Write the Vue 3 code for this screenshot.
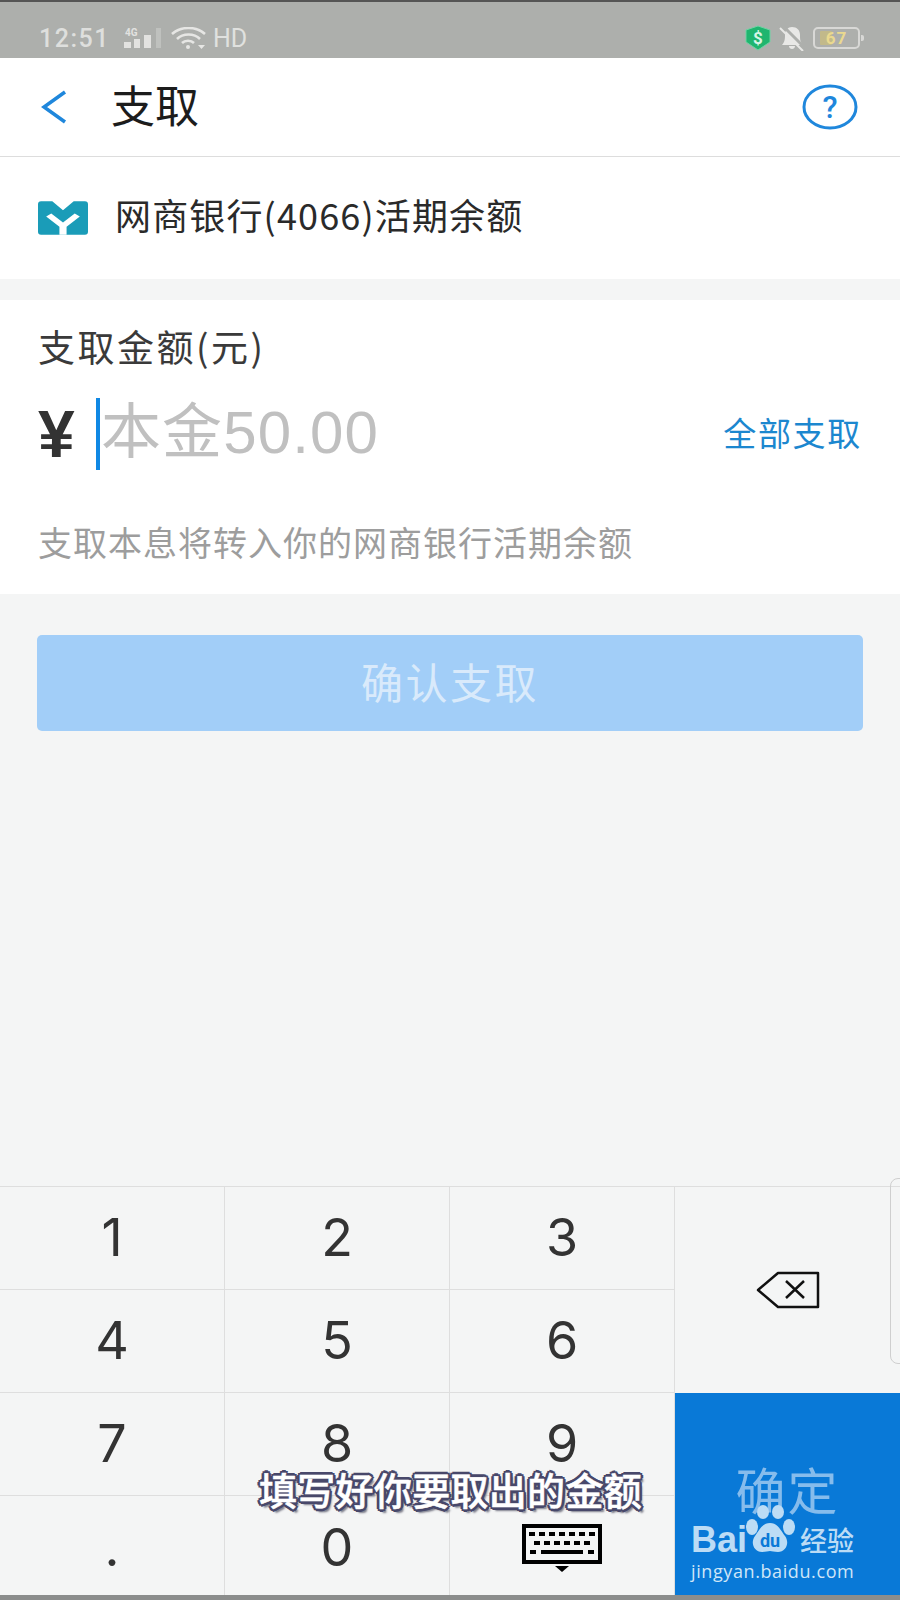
<script setup>
const keys = ['1','2','3','4','5','6','7','8','9','.','0']
</script>

<template>
  <div class="page">
    <div class="status">
      <div class="status-left">
        <span class="time">12:51</span>
        <svg class="signal" width="37" height="20" viewBox="0 0 37 20">
          <text x="1" y="8" class="g4">4G</text>
          <rect x="0" y="14" width="7" height="6" fill="#e2e2e0"/>
          <rect x="10" y="11" width="6" height="9" fill="#e2e2e0"/>
          <rect x="20" y="7" width="7" height="13" fill="#e2e2e0"/>
          <rect x="32" y="0" width="5" height="20" fill="#bfc1be"/>
        </svg>
        <svg class="wifi" width="36" height="22" viewBox="0 0 36 22" fill="none" stroke="#e6e6e4" stroke-width="2.600">
          <path d="M1 7C10-1 25-1 34 7"/>
          <path d="M6 12C12 6 23 6 29 12"/>
          <path d="M11 16C14 13 20 13 23 16"/>
          <circle cx="17" cy="20" r="2" fill="#e6e6e4" stroke="none"/>
          <path d="M27 18h7l-3.500 4z" fill="#e6e6e4" stroke="none"/>
        </svg>
        <span class="hd">HD</span>
      </div>
      <div class="status-right">
        <svg width="26" height="26" viewBox="0 0 26 26">
          <path d="M13 1L25 5V17L13 25L1 17V5Z" fill="#1fb56f" stroke="#6fd3a3" stroke-width="1"/>
          <text x="13" y="18.500" class="dollar">$</text>
        </svg>
        <svg width="26" height="26" viewBox="0 0 26 26">
          <path d="M3 20C6 17 6 13 6 10C6 5 9 2 13 2C18 2 21 5 21 10C21 14 21 17 24 20Z" fill="#e8e8e6"/>
          <path d="M10 21C10 25 16 25 16 21Z" fill="#e8e8e6"/>
          <path d="M3 0L26 23" stroke="#adafac" stroke-width="3"/>
          <path d="M1 3L24 26" stroke="#e8e8e6" stroke-width="2"/>
        </svg>
        <div class="battery">
          <span class="fill"></span>
          <span class="level">67</span>
          <span class="nub"></span>
        </div>
      </div>
    </div>

    <header class="nav">
      <svg class="back" width="26" height="34" viewBox="0 0 26 34" fill="none" stroke="#1f87dc" stroke-width="3.500">
        <path d="M24 2L3 17L24 32"/>
      </svg>
      <h1 class="title">支取</h1>
      <span class="spacer"></span>
      <svg class="help" width="56" height="46" viewBox="0 0 56 46">
        <ellipse cx="28" cy="23" rx="26" ry="21" fill="none" stroke="#1f87dc" stroke-width="3"/>
        <text x="28" y="34" class="qmark">?</text>
      </svg>
    </header>

    <section class="bank">
      <svg class="logo" width="50" height="34" viewBox="0 0 49 33">
        <path d="M3 0H14L24.500 9L35 0H46Q49 0 49 3V30Q49 33 46 33H3Q0 33 0 30V3Q0 0 3 0Z" fill="#1a9cb8"/>
        <path d="M8 15L13 12L24.500 21L36 12L41 15L28 25V33H21V25Z" fill="#fff"/>
      </svg>
      <span class="bank-name">网商银行(4066)活期余额</span>
    </section>

    <section class="amount">
      <div class="label">支取金额(元)</div>
      <div class="input-row">
        <span class="yen">¥</span>
        <span class="caret"></span>
        <span class="placeholder">本金50.00</span>
        <span class="spacer"></span>
        <span class="all">全部支取</span>
      </div>
      <div class="hint">支取本息将转入你的网商银行活期余额</div>
    </section>

    <div class="action">
      <div class="confirm">确认支取</div>
    </div>

    <span class="spacer"></span>

    <section class="keyboard">
      <div class="keys">
        <div v-for="k in keys" :key="k" class="key">{{ k }}</div>
        <div class="key">
          <svg width="80" height="48" viewBox="0 0 80 48">
            <path d="M2 2H78V38H2Z" fill="none" stroke="#000" stroke-width="4"/>
            <g fill="#000">
              <rect v-for="i in 7" :key="'a' + i" :x="i * 10 - 3" y="8" width="6" height="4"/>
              <rect v-for="i in 6" :key="'b' + i" :x="i * 10 + 2" y="17" width="6" height="4"/>
              <rect x="8" y="26" width="6" height="4"/>
              <rect x="19" y="26" width="42" height="4"/>
              <rect x="66" y="26" width="6" height="4"/>
              <path d="M33 42H47L40 48Z"/>
            </g>
          </svg>
        </div>
      </div>
      <div class="side">
        <div class="delete">
          <svg width="64" height="38" viewBox="0 0 64 38" fill="none" stroke="#111" stroke-width="2.500">
            <path d="M22 2H62V36H22L2 19Z" stroke-linejoin="round"/>
            <path d="M30 10L48 27M48 10L30 27"/>
          </svg>
        </div>
        <div class="ok">确定</div>
      </div>
      <span class="handle"></span>
    </section>

    <div class="bottom-line"></div>

    <div class="caption">填写好你要取出的金额</div>

    <div class="watermark">
      <svg class="paw" width="50" height="50" viewBox="0 0 50 50" fill="#bcdcf5">
        <ellipse cx="18" cy="7" rx="6" ry="7"/>
        <ellipse cx="33" cy="7" rx="6" ry="7"/>
        <ellipse cx="7" cy="22" rx="6" ry="8"/>
        <ellipse cx="44" cy="22" rx="6" ry="8"/>
        <path d="M25 18C33 18 36 26 40 31C45 38 41 47 33 47C29 47 27 46 25 46C23 46 21 47 17 47C9 47 5 38 10 31C14 26 17 18 25 18Z"/>
        <text x="25" y="42" class="du">du</text>
      </svg>
      <div class="brand-row">
        <span class="bai">Bai</span>
        <span class="brand-gap"></span>
        <span class="jy">经验</span>
      </div>
      <div class="url">jingyan.baidu.com</div>
    </div>
  </div>
</template>

<style>
html, body { margin: 0; padding: 0; }
</style>

<style scoped>
.page {
  position: relative;
  width: 900px;
  height: 1600px;
  overflow: hidden;
  display: flex;
  flex-direction: column;
  background: #f4f5f5;
  font-family: "Noto Sans CJK SC", "Open Sans", sans-serif;
  color: #222;
}
.spacer { flex: 1; }

.status {
  height: 40px;
  padding: 16px 40px 0 39px;
  border-top: 2px solid #555;
  background: #adafac;
  display: flex;
  align-items: center;
  justify-content: space-between;
  flex: none;
}
.status-left, .status-right { display: flex; align-items: center; }
.time {
  font: 500 25px/1 Roboto, sans-serif;
  color: #dedfdd;
  letter-spacing: 1.500px;
}
.signal { margin-left: 14px; }
.wifi { margin-left: 10px; }
.hd {
  font: 400 25px/1 Roboto, sans-serif;
  color: #e0e1df;
  margin-left: 6px;
}
.g4 { font: 700 10px Roboto, sans-serif; fill: #e2e2e0; }
.status-right { gap: 8px; }
.dollar { font: 700 17px Roboto, sans-serif; fill: #d8f5e6; text-anchor: middle; }
.battery {
  position: relative;
  width: 43px;
  height: 18px;
  border: 2px solid #d8d8d6;
  border-radius: 5px;
  display: flex;
  align-items: center;
  justify-content: center;
}
.fill { position: absolute; left: 5px; top: 2px; bottom: 2px; width: 12px; background: #c2b98a; border-radius: 1px; }
.level { position: relative; font: 700 17px/1 Roboto, sans-serif; color: #ead98f; letter-spacing: 1px; }
.nub { position: absolute; right: -6px; top: 6px; width: 3px; height: 6px; background: #d8d8d6; border-radius: 0 2px 2px 0; }

.nav {
  height: 98px;
  background: #fff;
  border-bottom: 1px solid #dddddd;
  display: flex;
  align-items: center;
  padding: 0 42px 0 41px;
  flex: none;
}
.back { margin-right: 44px; }
.title { margin: -6px 0 0; font-size: 44px; font-weight: 400; color: #1c1c1c; line-height: 1; }

.bank {
  height: 122px;
  background: #fff;
  display: flex;
  align-items: center;
  padding: 0 0 0 38px;
  flex: none;
}
.bank-name { margin: -8px 0 0 27px; font-size: 36px; color: #2a2a2a; line-height: 1; letter-spacing: 1.150px; }

.amount {
  margin-top: 21px;
  height: 294px;
  background: #fff;
  padding: 23px 38px 0;
  box-sizing: border-box;
  flex: none;
}
.label { font-size: 37px; line-height: 46px; color: #3a3a3a; letter-spacing: 2.500px; }
.input-row { display: flex; align-items: center; height: 72px; margin-top: 29px; }
.yen { font: 700 66px/1 "Liberation Sans", sans-serif; color: #333; width: 58px; }
.caret { width: 4px; height: 72px; background: #1088e4; margin-right: 1px; }
.placeholder { font: 400 60px/1 "Liberation Sans", "Noto Sans CJK SC", sans-serif; color: #c0c0c0; letter-spacing: 1.100px; margin-top: -3px; }
.all { font-size: 33px; color: #1c87cf; line-height: 1; letter-spacing: 1.700px; margin-top: -4px; }
.hint { margin-top: 50px; font-size: 34px; line-height: 44px; color: #9d9d9d; letter-spacing: 1px; }

.action { padding: 41px 37px 0; flex: none; }
.confirm {
  height: 90px;
  padding-bottom: 6px;
  border-radius: 5px;
  background: #a2cef8;
  color: #d9eafb;
  font-size: 42px;
  display: flex;
  align-items: center;
  justify-content: center;
  letter-spacing: 2.500px;
}

.keyboard {
  position: relative;
  height: 413px;
  border-top: 1px solid #dedede;
  display: flex;
  flex: none;
}
.keys {
  width: 675px;
  display: grid;
  grid-template-columns: repeat(3, 1fr);
  grid-template-rows: repeat(4, 103px);
}
.key {
  display: flex;
  align-items: center;
  justify-content: center;
  font: 400 52px/1 Inter, sans-serif;
  color: #333;
  border-right: 1px solid #dedede;
  border-bottom: 1px solid #dedede;
  box-sizing: border-box;
}
.key:nth-child(n+10) { border-bottom: none; }
.side { flex: 1; display: flex; flex-direction: column; }
.delete { height: 206px; display: flex; align-items: center; justify-content: center; }
.ok {
  flex: 1;
  background: #0979d7;
  color: #86bcec;
  font-size: 50px;
  display: flex;
  align-items: flex-start;
  justify-content: center;
  padding-top: 68px;
  box-sizing: border-box;
  line-height: 55px;
  letter-spacing: 2px;
}
.handle {
  position: absolute;
  right: -10px;
  top: -9px;
  width: 18px;
  height: 184px;
  border: 1px solid #cfcfcf;
  border-radius: 8px;
}
.bottom-line {
  position: absolute;
  left: 0;
  right: 0;
  bottom: 0;
  height: 5px;
  background: #8b8d8c;
}

.caption {
  position: absolute;
  left: 259px;
  top: 1466px;
  font-size: 38px;
  line-height: 46px;
  font-weight: 500;
  letter-spacing: 0.300px;
  color: #fff;
  white-space: nowrap;
  -webkit-text-stroke: 0.5px #fff;
  text-shadow:
    -2px -2px 0 #48486a, 2px -2px 0 #48486a, -2px 2px 0 #48486a, 2px 2px 0 #48486a,
    0 -3px 0 #48486a, 0 3px 0 #48486a, -3px 0 0 #48486a, 3px 0 0 #48486a,
    3px 4px 2px #7a7a88;
}

.watermark {
  position: absolute;
  left: 691px;
  top: 1505px;
  width: 180px;
  color: #bcdcf5;
}
.paw { position: absolute; left: 54px; top: 0; width: 50px; height: 50px; }
.du { font: 700 18px Roboto, sans-serif; fill: #0979d7; text-anchor: middle; }
.brand-row { position: absolute; left: 0; top: 17px; display: flex; align-items: center; height: 36px; }
.bai { font: 700 36px/36px "Liberation Sans", sans-serif; }
.brand-gap { width: 53px; }
.jy { font-size: 27px; line-height: 36px; font-weight: 500; }
.url { position: absolute; left: 0; top: 55px; font: 400 18px/22px "Open Sans", sans-serif; letter-spacing: 0.600px; white-space: nowrap; color: #cfe6f8; }
.qmark { font: 500 31px Roboto, sans-serif; fill: #1f87dc; text-anchor: middle; }
</style>
